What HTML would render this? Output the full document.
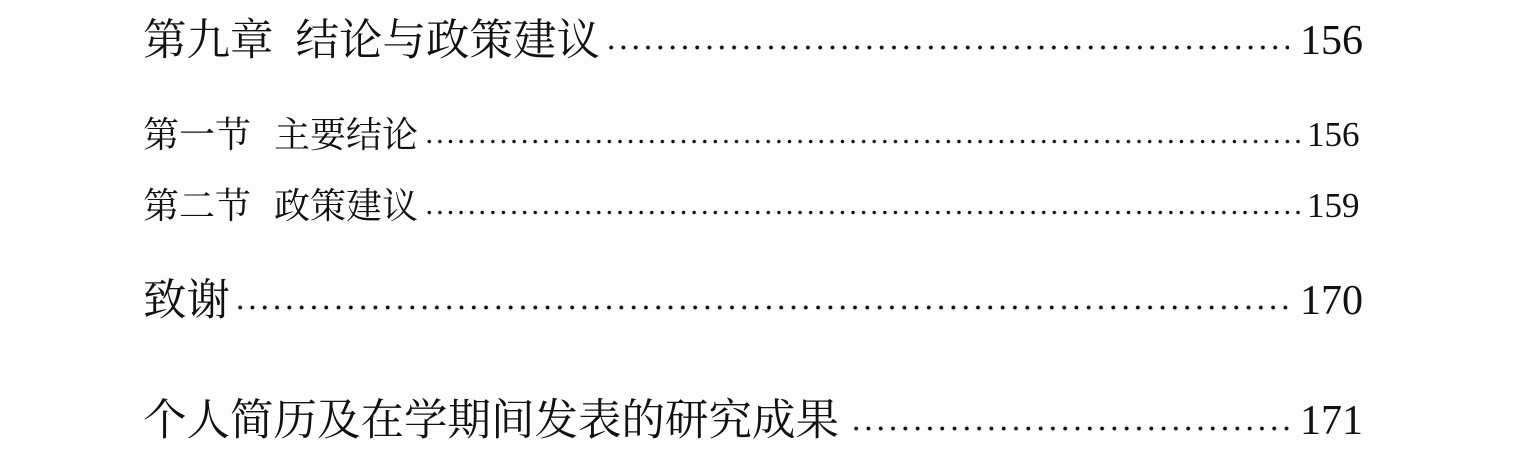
<!DOCTYPE html>
<html><head><meta charset="utf-8"><style>
html,body{margin:0;padding:0;background:#fdfdfd;}
body{width:1522px;height:466px;position:relative;overflow:hidden;color:#111;}
.t{position:absolute;left:143px;font-family:"Liberation Serif","Noto Serif CJK SC",serif;line-height:1;white-space:nowrap;}
.n{position:absolute;font-family:"Liberation Serif",serif;line-height:1;white-space:nowrap;}
.b{font-size:43.5px;}
.s{font-size:36px;}
.nb{font-size:42px;left:1300px;}
.ns{font-size:35px;left:1307px;}
.d{position:absolute;height:5px;}
.db{background:radial-gradient(circle,#111 1.7px,transparent 2.2px) 0 0/12.3px 5px repeat-x;}
.ds{background:radial-gradient(circle,#111 1.5px,transparent 2px) 0 0/10.6px 5px repeat-x;}
</style></head><body>
<div class="t b" style="top:20px">第九章<span style="display:inline-block;width:22px"></span>结论与政策建议</div>
<div class="d db" style="left:605px;width:684px;top:45px"></div>
<div class="n nb" style="top:20px">156</div>

<div class="t s" style="top:117px">第一节<span style="display:inline-block;width:23px"></span>主要结论</div>
<div class="d ds" style="left:424px;width:880px;top:139px"></div>
<div class="n ns" style="top:117px">156</div>

<div class="t s" style="top:188px">第二节<span style="display:inline-block;width:23px"></span>政策建议</div>
<div class="d ds" style="left:424px;width:880px;top:210px"></div>
<div class="n ns" style="top:188px">159</div>

<div class="t b" style="top:280px">致谢</div>
<div class="d db" style="left:234px;width:1055px;top:305px"></div>
<div class="n nb" style="top:280px">170</div>

<div class="t b" style="top:400px">个人简历及在学期间发表的研究成果</div>
<div class="d db" style="left:850px;width:439px;top:426px"></div>
<div class="n nb" style="top:400px">171</div>
</body></html>
